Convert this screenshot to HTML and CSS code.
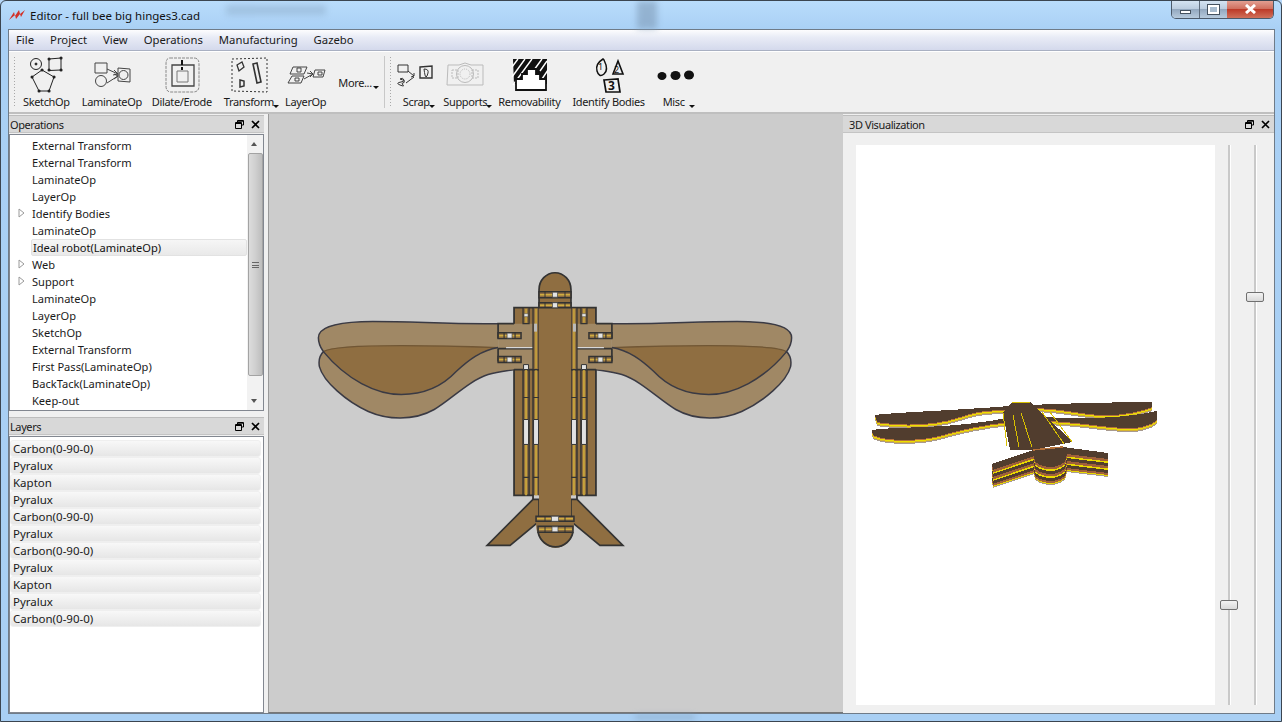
FILE: index.html
```html
<!DOCTYPE html>
<html lang="en">
<head>
    <meta charset="UTF-8">
    <title>Editor - full bee big hinges3.cad</title>
    <link rel="stylesheet" href="styles.css">
</head>
<body>
<svg class="defs" width="0" height="0">
    <symbol id="float-icon" viewBox="0 0 9 9">
        <path d="M2.500 2.500V.5h6v4.500h-2M.5 2.500h6v6h-6zM.5 3.500h6M3 1.200h5" fill="none" stroke="#000"/>
    </symbol>
    <symbol id="close-icon" viewBox="0 0 9 9">
        <path d="M1 1l7 7M8 1l-7 7" fill="none" stroke="#000" stroke-width="1.700"/>
    </symbol>
    <symbol id="expand-icon" viewBox="0 0 7 10">
        <path d="M1 1l5 4-5 4z" fill="#fff" stroke="#9a9a9a"/>
    </symbol>
</svg>

<div class="window">
    <div class="glass-smudge smudge-a"></div>
    <div class="glass-smudge smudge-b"></div>
    <div class="glass-smudge smudge-c"></div>

    <div class="titlebar">
        <svg class="app-icon" viewBox="0 0 16 12"><path d="M0 11L5 3l1 4 4-6 1 4 5-4-4 7-1-3-4 5-1-4z" fill="#d2322a"/></svg>
        <span class="app-title">Editor - full bee big hinges3.cad</span>
        <div class="win-buttons">
            <div class="win-btn win-min"><span class="min-glyph"></span></div>
            <div class="win-btn win-max"><span class="max-glyph"></span></div>
            <div class="win-btn win-close">
                <svg width="13" height="10" viewBox="0 0 13 10"><path d="M2 1l9 8M11 1l-9 8" stroke="#fff" stroke-width="3"/></svg>
            </div>
        </div>
    </div>

    <div class="client">
        <div class="menubar">
            <span>File</span><span>Project</span><span>View</span><span>Operations</span><span>Manufacturing</span><span>Gazebo</span>
        </div>

        <div class="toolbar">
            <div class="grip"></div>
            <div class="tool tool-sketch">
                <svg class="tool-icon" viewBox="23 56 48 40" fill="none" stroke="#222">
                    <circle cx="37" cy="65" r="5.500"/><circle cx="37" cy="65" r="1" fill="#222"/>
                    <path d="M50 60l12-1v12l-12 .5z"/>
                    <path d="M43 71l12 7-5 14H40l-7-14z"/>
                    <path d="M43 71h.1M55 78h.1M50 92h.1M40 92h.1M33 78h.1M50 60h.1M62 59h.1M62 71h.1M50 71h.1" stroke-width="3" stroke-linecap="round"/>
                </svg>
                <span>SketchOp</span>
            </div>
            <div class="tool tool-laminate">
                <svg class="tool-icon" viewBox="87 56 48 40" fill="none" stroke="#444">
                    <path d="M94 64h12v10H94z"/><circle cx="100" cy="82" r="5.500"/>
                    <path d="M106 70l11 5M106 84l11-7M113 71l4 4-5 1M113 80l4-3-4-2"/>
                    <path d="M117 69l12 1v13l-12-1z"/><circle cx="122.500" cy="76" r="4.500"/>
                </svg>
                <span>LaminateOp</span>
            </div>
            <div class="tool tool-dilate">
                <svg class="tool-icon" viewBox="158 56 48 40" fill="none" stroke="#444">
                    <path d="M170 59h24q5 0 5 6v22q0 6-6 6h-22q-5 0-5-6V65q0-6 4-6z" stroke="#888" stroke-dasharray="3 1"/>
                    <path d="M172 66h22v21h-22z" stroke-width="1.300"/>
                    <path d="M177 72h11v11h-11z" stroke="#777"/>
                    <path d="M182 66v-5M182 71v-3" stroke="#111" stroke-width="2"/>
                </svg>
                <span>Dilate/Erode</span>
            </div>
            <div class="tool tool-transform">
                <svg class="tool-icon" viewBox="225 56 48 40" fill="none" stroke="#333">
                    <path d="M232 60l35-1 0 34-35-1z" stroke-dasharray="2 2"/>
                    <path d="M237 66l5-3 2 5-5 4z" stroke-width="1.300"/>
                    <path d="M253 65l4-1 4 19-4 1z" stroke-width="1.600"/>
                    <path d="M240 81l4 1v5l-4 1z" stroke-width="1.500"/>
                </svg>
                <span>Transform</span>
                <i class="drop"></i>
            </div>
            <div class="tool tool-layer">
                <svg class="tool-icon" viewBox="282 56 48 40" fill="none" stroke="#444">
                    <path d="M293 68h14l-3 7h-14zM292 77h12l-3 7h-13z"/>
                    <path d="M297 69h4v4h-4zM295 79h4v3h-4z"/>
                    <path d="M307 74l6 1M304 80l9-5M310 72l3 3-3 3"/>
                    <path d="M315 71h10l-2 7h-10z"/><path d="M318 73h4v3h-4z"/>
                </svg>
                <span>LayerOp</span>
            </div>
            <div class="tool-more">More...<i class="drop"></i></div>
            <div class="grip grip-second"></div>
            <div class="tool tool-scrap">
                <svg class="tool-icon" viewBox="393 56 48 40" fill="none" stroke="#333">
                    <path d="M399 66h10v7h-10zM401 80q3-2 4 1t-1 3 0 2-3 0 1-3-1-3z"/>
                    <path d="M409 72l6 5M407 84l8-6M412 78l3-1 0-3"/>
                    <path d="M421 68l12-1v12l-12 0z" stroke-width="1.400"/><path d="M425 70q5 0 4 4t-2 4-2-8z"/>
                </svg>
                <span>Scrap</span>
                <i class="drop"></i>
            </div>
            <div class="tool tool-supports">
                <svg class="tool-icon" viewBox="441 56 48 40" fill="none" stroke="#bbb">
                    <path d="M448 66l11 0 6-2 6 2 12 0 0 20-36 0z"/>
                    <circle cx="465" cy="75" r="8.500"/><circle cx="465" cy="75" r="5" stroke-dasharray="1 1"/>
                    <path d="M452 71h6v8h-6zM472 71h6v8h-6z" stroke-dasharray="2 1"/>
                </svg>
                <span>Supports</span>
                <i class="drop"></i>
            </div>
            <div class="tool tool-removable">
                <svg class="tool-icon" viewBox="506 56 48 40" fill="none" stroke="#111">
                    <path d="M514 60h34v25h-33z" fill="#111" stroke="none"/>
                    <path d="M513 68l6-8M513 78l13-18M514 86l19-26M527 82l16-22M541 72l7-10M543 80l6-9" stroke="#fff" stroke-width="1.400"/>
                    <path d="M517 91V80h6v-5h5v-5h9v5h4v5h6v11z" fill="#fff" stroke-width="1.800"/>
                </svg>
                <span>Removability</span>
            </div>
            <div class="tool tool-identify">
                <svg class="tool-icon" viewBox="585 56 48 40" fill="none" stroke="#111">
                    <path d="M603 60q-8 5-6 12t7 3 0-14z" stroke-width="1.500"/>
                    <path d="M618 62l-5 13h10z" stroke-width="1.600"/>
                    <path d="M604 81l14-1 2 13-14 0z" stroke-width="1.700"/>
                    <text x="598" y="71" class="id-num">1</text>
                    <text x="614" y="74" class="id-num">2</text>
                    <text x="608" y="91" class="id-num id-num-big">3</text>
                </svg>
                <span>Identify Bodies</span>
            </div>
            <div class="tool tool-misc">
                <svg class="tool-icon" viewBox="652 56 48 40" fill="#111">
                    <ellipse cx="660" cy="77" rx="4.500" ry="4"/><ellipse cx="673.500" cy="76.500" rx="5" ry="4.500"/><ellipse cx="687" cy="76" rx="5" ry="4.500"/>
                </svg>
                <span>Misc</span>
                <i class="drop"></i>
            </div>
        </div>

        <div class="workspace">
            <div class="dock-left">
                <div class="dock-title"><span>Operations</span><svg class="dt-icon"><use href="#float-icon"/></svg><svg class="dt-icon"><use href="#close-icon"/></svg></div>
                <div class="tree">
                    <ul class="tree-rows">
                        <li>External Transform</li>
                        <li>External Transform</li>
                        <li>LaminateOp</li>
                        <li>LayerOp</li>
                        <li><svg class="expander"><use href="#expand-icon"/></svg>Identify Bodies</li>
                        <li>LaminateOp</li>
                        <li class="picked">Ideal robot(LaminateOp)</li>
                        <li><svg class="expander"><use href="#expand-icon"/></svg>Web</li>
                        <li><svg class="expander"><use href="#expand-icon"/></svg>Support</li>
                        <li>LaminateOp</li>
                        <li>LayerOp</li>
                        <li>SketchOp</li>
                        <li>External Transform</li>
                        <li>First Pass(LaminateOp)</li>
                        <li>BackTack(LaminateOp)</li>
                        <li>Keep-out</li>
                    </ul>
                    <div class="scrollbar">
                        <div class="sb-arrow sb-up"></div>
                        <div class="sb-thumb"><i></i></div>
                        <div class="sb-arrow sb-down"></div>
                    </div>
                </div>
                <div class="dock-title dock-title-layers"><span>Layers</span><svg class="dt-icon"><use href="#float-icon"/></svg><svg class="dt-icon"><use href="#close-icon"/></svg></div>
                <ul class="layers">
                    <li>Carbon(0-90-0)</li>
                    <li>Pyralux</li>
                    <li>Kapton</li>
                    <li>Pyralux</li>
                    <li>Carbon(0-90-0)</li>
                    <li>Pyralux</li>
                    <li>Carbon(0-90-0)</li>
                    <li>Pyralux</li>
                    <li>Kapton</li>
                    <li>Pyralux</li>
                    <li>Carbon(0-90-0)</li>
                </ul>
            </div>

            <div class="canvas">
                <svg class="bee" viewBox="268 114 574 599">
                    <defs>
                        <g id="hinge">
                            <path d="M0 0h23v6H0z" fill="#8f6e41" stroke="#333" stroke-width="1.500"/>
                            <path d="M1 3h21" stroke="#d0ad40" stroke-width="1.600"/>
                            <path d="M6 0v6M17 0v6" stroke="#333" stroke-width="1.200"/>
                            <path d="M9 .5h5v5H9z" fill="#e4e4e4" stroke="#444" stroke-width=".7"/>
                        </g>
                        <g id="strip">
                            <path d="M0 0v126M6 0v126" stroke="#333" stroke-width="1.500"/>
                            <path d="M3 0v126" stroke="#c9a63c" stroke-width="1.800"/>
                            <path d="M0 28h6M0 108h6" stroke="#333" stroke-width="1.200"/>
                        </g>
                        <g id="half">
                            <path d="M497 324C450 325 400 321 360 322C335 323 317 327 317 338C317 345 320 349 322 352C318 356 317 361 318 367C322 382 345 402 367 412C385 420 412 422 433 410C450 400 468 381 487 375C497 372 508 371 520 370V348H497z" fill="#a08865"/>
                            <path d="M322 352C328 348 350 346 400 346C440 346 470 347 497 348C480 351 468 360 455 372C440 388 420 395 400 395C375 395 345 380 322 352z" fill="#8f6e41"/>
                            <path d="M322 352C328 348 350 346 400 346C440 346 470 347 497 348" fill="none" stroke="#705634" stroke-width="1.300"/>
                            <path d="M497 324C450 325 400 321 360 322C335 323 317 327 317 338C317 345 320 349 322 352C318 356 317 361 318 367C322 382 345 402 367 412C385 420 412 422 433 410C450 400 468 381 487 375C497 372 508 371 513 370" fill="none" stroke="#3a3a44" stroke-width="1.500"/>
                            <path d="M322 352C345 380 375 395 400 395C420 395 440 388 455 372C468 360 480 351 497 348" fill="none" stroke="#3a3a44" stroke-width="1.500"/>
                            <path d="M513 308h25v188h-25z" fill="#8f6e41"/>
                            <path d="M497 324h37v25h-37zM497 349h37v21h-37z" fill="#a08865"/>
                            <path d="M538 500H532L486 546H509L538 522z" fill="#8f6e41" stroke="#333" stroke-width="1.700"/>
                            <path d="M513 324V308H538M513 370V496H532V500" fill="none" stroke="#333" stroke-width="1.800"/>
                            <path d="M513 324H497V339M497 349V362M497 349H537M513 370H538M534 324V349" fill="none" stroke="#333" stroke-width="1.700"/>
                            <path d="M505 348h32" stroke="#d8d8d8" stroke-width="1.200"/>
                            <use href="#hinge" x="497" y="333"/>
                            <use href="#hinge" x="497" y="357"/>
                            <use href="#strip" x="522" y="370"/>
                            <use href="#strip" x="532" y="370"/>
                            <path d="M522 308h6v16h-6zM532 308h6v62h-6z" fill="#8f6e41" stroke="#333" stroke-width="1.300"/>
                            <path d="M525 309v14M535 309v60" stroke="#c9a63c" stroke-width="1.600"/>
                            <path d="M523 314h4v3h-4z" fill="#e4e4e4" stroke="#444" stroke-width=".5"/>
                            <path d="M533 324h3v8h-3z" fill="#bbb"/>
                            <path d="M522.500 365h5v5h-5zM522.500 420h5v25h-5zM532.500 420h5v25h-5z" fill="#e2e2e2" stroke="#333"/>
                        </g>
                    </defs>
                    <use href="#half"/>
                    <use href="#half" transform="translate(1108 0) scale(-1 1)"/>
                    <path d="M538 500V290A16 17 0 0 1 570 290V517H573V522C573 530 572 533 572 534A18 19 0 0 1 537 534C536 533 535 530 535 522V517H538z" fill="#8f6e41"/>
                    <path d="M538 308V290A16 17 0 0 1 570 290V308" fill="none" stroke="#333" stroke-width="1.700"/>
                    <path d="M537 533A18 19 0 0 0 572 533" fill="none" stroke="#333" stroke-width="1.700"/>
                    <path d="M538 292h32v6h-32zM538 303h32v5h-32zM535 517h38v5h-38zM537 527h35v6h-35z" fill="#8f6e41" stroke="#333" stroke-width="1.500"/>
                    <path d="M539 295h30M539 305.500h30M536 519.500h36M538 530h33" stroke="#d0ad40" stroke-width="1.600"/>
                    <path d="M544 292v6M564 292v6M544 303v5M564 303v5M544 517v5M564 517v5M544 527v6M564 527v6" stroke="#333"/>
                    <path d="M551.500 292.500h5v5h-5zM551.500 303h5v5h-5zM550.500 517h7v5h-7zM551 527.500h6v5h-6z" fill="#e4e4e4" stroke="#444" stroke-width=".7"/>
                </svg>
            </div>

            <div class="dock-right">
                <div class="dock-title"><span>3D Visualization</span><svg class="dt-icon"><use href="#float-icon"/></svg><svg class="dt-icon"><use href="#close-icon"/></svg></div>
                <div class="viz-row">
                    <div class="viz-view">
                        <svg class="viz-model" viewBox="856 145 359 560">
                            <defs>
                                <path id="wings" d="M875 415C885 413 960 410 1010 406V410C985 410 975 412 960 417C935 426 900 426 877 422zM872 430C895 426 950 430 1012 417V422C985 424 960 430 943 435C925 441 885 442 873 435zM1030 405C1075 403 1130 402 1152 402V407C1140 412 1120 416 1100 415C1080 414 1060 408 1030 408zM1045 417C1080 420 1127 418 1157 411V420C1150 426 1137 429 1125 428C1100 427 1080 422 1045 421z"/>
                                <path id="legs" d="M992 464L1033 450L1063 447L1108 453V459L1067 454L1065 462Q1050 472 1035 462L1034 456L993 470z"/>
                            </defs>
                            <g>
                                <use href="#wings" y="4" fill="#a89a90"/>
                                <use href="#wings" y="3" fill="#d8b430"/>
                                <use href="#wings" y="2" fill="#ece000"/>
                                <use href="#wings" y="1" fill="#b5713a"/>
                                <use href="#wings" fill="#513d2e"/>
                            </g>
                            <g>
                                <use href="#legs" y="18" fill="#a89a90"/>
                                <use href="#legs" y="17" fill="#e8d800"/>
                                <use href="#legs" y="16" fill="#a0603a"/>
                                <use href="#legs" y="14" fill="#513d2e"/>
                                <use href="#legs" y="11" fill="#e8d800"/>
                                <use href="#legs" y="9.500" fill="#a0603a"/>
                                <use href="#legs" y="7" fill="#513d2e"/>
                                <use href="#legs" y="4" fill="#e8d800"/>
                                <use href="#legs" y="2.500" fill="#a0603a"/>
                                <use href="#legs" fill="#513d2e"/>
                            </g>
                            <path d="M1012 402L1030 402L1073 442L1032 450L1010 450L1003 413z" fill="#513d2e"/>
                            <path d="M1003 413L1007 446M1013 415l6 32M1021 413l11 34M1042 412l22 32M1050 412l22 30M1012 402L1030 402" fill="none" stroke="#d8c000" stroke-width="1"/>
                            <path d="M1033 450L1063 447" fill="none" stroke="#b5713a" stroke-width="1.500"/>
                        </svg>
                    </div>
                    <div class="slider"><div class="handle handle-low"></div></div>
                    <div class="slider"><div class="handle handle-high"></div></div>
                </div>
            </div>
        </div>
    </div>
</div>
</body>
</html>
```

FILE: styles.css
```css
* {
    box-sizing: border-box;
}
html, body {
    margin: 0;
    padding: 0;
}
body {
    font-family: "Noto Sans", "Open Sans", sans-serif;
    font-size: 11.5px;
    color: #1a1a1a;
    background: #b5d6f7;
}
.defs {
    position: absolute;
}
ul {
    list-style: none;
    margin: 0;
    padding: 0;
}
.window {
    position: relative;
    width: 1282px;
    height: 722px;
    display: flex;
    flex-direction: column;
    overflow: hidden;
    background: linear-gradient(#b9dcfb 0, #a9d0f5 29px, #a9cff3 100%);
    border: 1px solid #3b4550;
    border-radius: 6px 6px 0 0;
}
.glass-smudge {
    position: absolute;
    filter: blur(3px);
    background: #7f9bb8;
    opacity: .6;
}
.smudge-a {
    left: 225px;
    top: 4px;
    width: 100px;
    height: 10px;
    opacity: .35;
}
.smudge-b {
    left: 636px;
    top: 0;
    width: 20px;
    height: 28px;
}
.smudge-c {
    left: 634px;
    top: 714px;
    width: 60px;
    height: 4px;
}

/* title bar */
.titlebar {
    height: 28px;
    display: flex;
    align-items: center;
    padding-left: 8px;
    flex-shrink: 0;
}
.app-icon {
    width: 16px;
    height: 12px;
    margin-right: 5px;
}
.app-title {
    font-size: 11.5px;
    color: #111;
    position: relative;
}
.win-buttons {
    margin-left: auto;
    margin-right: 7px;
    align-self: flex-start;
    display: flex;
    height: 19px;
    margin-top: -1px;
    border: 1px solid #4c5a6a;
    border-top: none;
    border-radius: 0 0 5px 5px;
    overflow: hidden;
}
.win-btn {
    display: flex;
    align-items: center;
    justify-content: center;
    height: 100%;
    background: linear-gradient(#d7e6f4 0, #bccddf 48%, #93a8bf 52%, #b7cadc 100%);
}
.win-min {
    width: 28px;
    border-right: 1px solid #5e6c7c;
}
.win-max {
    width: 27px;
}
.win-close {
    width: 46px;
    background: linear-gradient(#e5a598 0, #d0705f 48%, #bd3a28 52%, #d0705a 100%);
}
.min-glyph {
    width: 11px;
    height: 4px;
    margin-top: 5px;
    background: #fff;
    border: 1px solid #45525f;
}
.max-glyph {
    width: 11px;
    height: 9px;
    border: 2px solid #fff;
    outline: 1px solid #45525f;
    background: #a8bccf;
}

/* main area */
.client {
    flex: 1;
    margin: 0 6px 7px 7px;
    display: flex;
    flex-direction: column;
    background: #f0f0f0;
    border: 1px solid #6f7b88;
    min-height: 0;
}
.menubar {
    height: 21px;
    display: flex;
    align-items: center;
    gap: 16px;
    padding: 0 0 2px 7px;
    font-size: 11.3px;
    background: linear-gradient(#fdfdfe 0, #e9ecf6 35%, #d4d9ec 100%);
    border-bottom: 1px solid #a9b0c2;
    flex-shrink: 0;
}
.toolbar {
    height: 63px;
    display: flex;
    align-items: stretch;
    background: #f0f0f0;
    border-top: 1px solid #fff;
    border-bottom: 2px solid #bfbfbf;
    flex-shrink: 0;
    padding-left: 4px;
    position: relative;
    font-size: 11px;
    letter-spacing: -.35px;
}
.grip {
    width: 3px;
    margin: 4px 0;
    background-image: radial-gradient(#a8a8a8 40%, transparent 45%);
    background-size: 3px 3px;
}
.grip-second {
    margin-left: 6px;
    border-left: 1px solid #c8c8c8;
    width: 8px;
    background-position: 4px 0;
    background-repeat: repeat-y;
}
.tool {
    position: relative;
    display: flex;
    flex-direction: column;
    align-items: center;
    justify-content: flex-start;
    flex-shrink: 0;
    white-space: nowrap;
    padding-top: 3px;
    margin-left: 12px;
}
.tool span {
    margin-top: 0;
    line-height: 14px;
}
.tool-icon {
    width: 48px;
    height: 40px;
    margin: 0 -10px;
    display: block;
}
.id-num {
    font: 9px "Noto Sans", sans-serif;
    fill: #111;
    stroke: none;
}
.id-num-big {
    font-size: 12px;
    font-weight: bold;
}
.tool-sketch {
    margin-left: 7px;
}
.tool-dilate {
    margin-left: 10px;
}
.tool-layer {
    margin-left: 11px;
}
.tool-more {
    position: relative;
    margin-left: 12px;
    width: 40px;
    padding-top: 23px;
    white-space: nowrap;
}
.drop {
    position: absolute;
    right: -5px;
    bottom: 4px;
    width: 0;
    height: 0;
    border: 3px solid transparent;
    border-top: 3px solid #111;
    border-bottom: none;
}
.tool-more .drop {
    right: -1px;
    bottom: 23px;
}
.tool-misc {
    margin-left: 18px;
}
.tool-misc .drop {
    right: -2px;
}
.tool-misc span {
    padding-right: 8px;
}
.tool-scrap {
    margin-left: 10px;
}
.tool-supports {
    margin-left: 13px;
}
.tool-removable {
    margin-left: 11px;
}

.workspace {
    flex: 1;
    display: flex;
    min-height: 0;
}

/* docks */
.dock-left {
    width: 255px;
    margin-right: 4px;
    display: flex;
    flex-direction: column;
    flex-shrink: 0;
}
.dock-title {
    height: 18px;
    margin-top: 1px;
    display: flex;
    align-items: center;
    gap: 7px;
    padding: 0 4px 0 1px;
    font-size: 11px;
    background: #d8d8d8;
    border-top: 1px solid #bdbdbd;
    border-bottom: 1px solid #c4c4c4;
    flex-shrink: 0;
}
.dock-title span {
    flex: 1;
    letter-spacing: -.4px;
}
.dt-icon {
    width: 9px;
    height: 9px;
}
.dock-title-layers {
    margin-top: 6px;
}
.tree {
    height: 277px;
    margin-top: 1px;
    display: flex;
    border: 1px solid #828790;
    background: #fff;
    flex-shrink: 0;
    font-size: 11.1px;
}
.tree-rows {
    flex: 1;
    padding-top: 2px;
}
.tree-rows li {
    position: relative;
    height: 17px;
    line-height: 17px;
    padding-left: 22px;
    white-space: nowrap;
}
.tree-rows li.picked {
    margin-left: 21px;
    padding-left: 1px;
    background: linear-gradient(#f6f6f6, #e9e9e9);
    border: 1px solid #e2e2e2;
    border-radius: 2px;
    line-height: 15px;
    color: #111;
}
.expander {
    position: absolute;
    left: 8px;
    top: 3px;
    width: 7px;
    height: 10px;
}
.scrollbar {
    width: 16px;
    display: flex;
    flex-direction: column;
    align-items: center;
    background: #f2f2f2;
}
.sb-arrow {
    height: 18px;
    width: 100%;
    position: relative;
}
.sb-arrow::after {
    content: "";
    position: absolute;
    left: 4px;
    top: 7px;
    border: 3.500px solid transparent;
    border-top: none;
    border-bottom: 4px solid #555;
}
.sb-down::after {
    border-bottom: none;
    border-top: 4px solid #555;
}
.sb-thumb {
    width: 15px;
    height: 223px;
    margin-bottom: auto;
    background: linear-gradient(90deg, #dcdcdc, #cfcfcf 50%, #bdbdbd);
    border: 1px solid #a3a3a3;
    border-radius: 2px;
    display: flex;
    align-items: center;
    justify-content: center;
}
.sb-thumb i {
    width: 7px;
    height: 6px;
    border-top: 1px solid #666;
    border-bottom: 1px solid #666;
    background: linear-gradient(#0000 2px, #666 2px, #666 3px, #0000 3px);
}
.layers {
    flex: 1;
    margin-top: 1px;
    padding: 3px 2px 0 0;
    border: 1px solid #828790;
    background: #fff;
}
.layers li {
    height: 17px;
    line-height: 16px;
    padding-left: 2px;
    background: linear-gradient(#f8f8f8, #e6e6e6);
    border: 1px solid #efefef;
    border-radius: 3px;
}

/* drawing area */
.canvas {
    width: 575px;
    flex-shrink: 0;
    background: #cccccc;
    border-left: 1px solid #9a9a9a;
    border-bottom: 1px solid #777;
}
.bee {
    display: block;
    width: 100%;
    height: 100%;
}

.dock-right {
    flex: 1;
    display: flex;
    flex-direction: column;
    min-width: 0;
}
.dock-right .dock-title {
    padding-left: 6px;
}
.viz-row {
    flex: 1;
    display: flex;
    padding: 12px 0 8px 13px;
    min-height: 0;
}
.viz-view {
    width: 359px;
    background: #fff;
    flex-shrink: 0;
}
.viz-model {
    display: block;
    width: 100%;
    height: 100%;
    shape-rendering: crispEdges;
}
.slider {
    position: relative;
    width: 25px;
    margin-left: 1px;
}
.slider::before {
    content: "";
    position: absolute;
    left: 12px;
    top: 0;
    bottom: 0;
    width: 2px;
    background: #c9c9c9;
    border-right: 1px solid #fff;
}
.handle {
    position: absolute;
    left: 4px;
    width: 18px;
    height: 10px;
    background: linear-gradient(#f3f3f3, #d9d9d9);
    border: 1px solid #707070;
    border-radius: 2px;
}
.handle-low {
    top: 455px;
}
.handle-high {
    top: 147px;
}
```
